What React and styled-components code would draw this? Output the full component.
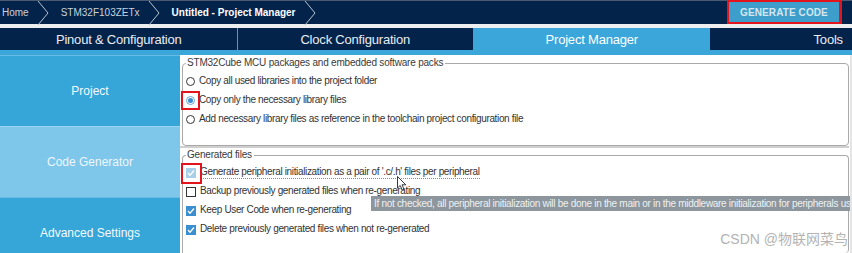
import React from 'react'
import styled, { createGlobalStyle } from 'styled-components'

const GlobalStyle = createGlobalStyle`
    html, body {
        margin: 0;
        padding: 0;
        width: 852px;
        height: 253px;
        overflow: hidden;
        background: #ffffff;
        font-family: "Liberation Sans", Arial, sans-serif;
    }
`;

const Page = styled.div`
    position: relative;
    width: 852px;
    height: 253px;
    display: flex;
    flex-direction: column;
    background: #eceef0;
    overflow: hidden;
`;
const TopBar = styled.div`
    height: 24px;
    display: flex;
    align-items: stretch;
    justify-content: space-between;
    background: #03234b;
    border-top: 1px solid #4a5a70;
    box-sizing: border-box;
`;
const Crumbs = styled.div`
    display: flex;
    align-items: center;
    padding-left: 2px;
`;
const Crumb = styled.div`
    display: flex;
    align-items: center;
    height: 100%;
    font-size: 10px;
    font-weight: ${p => (p.$current ? 'bold' : 'normal')};
    color: ${p => (p.$current ? '#ffffff' : '#c9d2dc')};
    svg { margin: 0 12px 0 8px; }
`;
const GenerateButton = styled.div`
    margin: -1px 10px 0 0;
    width: 115px;
    height: 24px;
    box-sizing: border-box;
    border: 2px solid #e3141b;
    border-right-width: 3px;
    background: #3d9dcb;
    color: #d6e6ef;
    font-size: 10px;
    font-weight: bold;
    display: flex;
    align-items: center;
    justify-content: center;
    letter-spacing: 0.1px;
`;
const TabBar = styled.div`
    margin-top: 4px;
    height: 22px;
    display: flex;
    background: #03234b;
    border-bottom: 5px solid #3aa6d9;
`;
const Tab = styled.div`
    flex: 0 0 236.5px;
    box-sizing: border-box;
    display: flex;
    align-items: center;
    justify-content: center;
    font-size: 13px;
    letter-spacing: -0.2px;
    color: ${p => (p.$active ? '#ffffff' : '#e9edf2')};
    background: ${p => (p.$active ? '#3aa6d9' : 'transparent')};
    border-left: 1px solid ${p => (p.$divider ? '#7c8a99' : 'transparent')};
`;
const Main = styled.div`
    flex: 1;
    display: flex;
    min-height: 0;
`;
const Sidebar = styled.div`
    width: 180px;
    display: flex;
    flex-direction: column;
    flex-shrink: 0;
`;
const SideItem = styled.div`
    flex: 0 0 70px;
    display: flex;
    align-items: center;
    justify-content: center;
    font-size: 12px;
    color: ${p => (p.$selected ? '#eef7fc' : '#f4fafd')};
    background: ${p => (p.$selected ? '#7ec6ea' : '#36a5d8')};
    border-top: 1px solid rgba(255, 255, 255, 0.25);
`;
const Content = styled.div`
    position: relative;
    flex: 1;
    display: flex;
    flex-direction: column;
    background: #ffffff;
    padding: 2px 1px 0 2px;
    border-right: 2px solid #e4e4e4;
`;
const Group = styled.fieldset`
    margin: 0;
    padding: ${p => p.$top}px 0 ${p => p.$bottom || 0}px 3px;
    border: 1px solid #a9a9a9;
    border-radius: 4px;
    ${p => p.$open && 'border-bottom: none; border-bottom-left-radius: 0; flex: 1;'}
    min-width: 0;
`;
const Legend = styled.legend`
    font-size: 10px;
    line-height: 12px;
    color: #3a3a3a;
    padding: 0 2px 0 1px;
    margin-left: 0;
    letter-spacing: -0.2px;
`;
const Divider = styled.div`
    height: 2px;
    margin: 0 0 1px -2px;
    background: #cfcfcf;
`;
const Row = styled.div`
    height: 19px;
    display: flex;
    align-items: center;
    gap: 4px;
    font-size: 10px;
    color: #333333;
    letter-spacing: -0.35px;
`;
const Label = styled.span`
    border-bottom: 1px dotted ${p => (p.$focus ? '#8a8a8a' : 'transparent')};
    line-height: 12px;
`;
const Control = styled.span`
    position: relative;
    flex-shrink: 0;
    display: inline-flex;
    align-items: center;
    justify-content: center;
    box-sizing: border-box;
`;
const Radio = styled(Control)`
    width: 9px;
    height: 9px;
    border-radius: 50%;
    border: 1px solid ${p => (p.$on ? '#6aa9d6' : '#333333')};
    background: #ffffff;
    &::after {
        content: '';
        display: ${p => (p.$on ? 'block' : 'none')};
        width: 5px;
        height: 5px;
        border-radius: 50%;
        background: #3b8fd0;
    }
`;
const Check = styled(Control)`
    width: 10px;
    height: 10px;
    border: 1px solid ${p => (p.$on ? (p.$dim ? '#a8d0ea' : '#3a8fd0') : '#333333')};
    background: ${p => (p.$on ? (p.$dim ? '#a8d0ea' : '#3a8fd0') : '#ffffff')};
`;
const Marker = styled.span`
    position: absolute;
    left: -6px;
    top: ${p => p.$top}px;
    width: ${p => p.$size}px;
    height: ${p => p.$size}px;
    border: 2px solid #e3141b;
    box-sizing: border-box;
    pointer-events: none;
`;
const Tooltip = styled.div`
    position: absolute;
    left: 191px;
    top: 141px;
    right: 0;
    height: 15px;
    padding-left: 3px;
    background: #8c969c;
    color: #eef1f2;
    font-size: 10px;
    line-height: 15px;
    letter-spacing: -0.3px;
    white-space: nowrap;
    overflow: hidden;
`;
const Cursor = styled.svg`
    position: absolute;
    left: 217px;
    top: 121px;
`;
const Watermark = styled.div`
    position: absolute;
    right: 4px;
    bottom: 5px;
    font-family: "Liberation Sans", "Noto Sans CJK SC", sans-serif;
    font-size: 14px;
    color: #b3b3b3;
    text-shadow: 0 0 2px #ffffff;
`;

const Chevron = () => (
    <svg width='12' height='24' viewBox='0 0 12 24'>
        <polyline points='1,0 11,12 1,24' fill='none' stroke='#b9c3ce' strokeWidth='1' />
    </svg>
)

const Tick = () => (
    <svg width='8' height='8' viewBox='0 0 8 8'>
        <polyline points='1,4 3,6.2 7,1.5' fill='none' stroke='#ffffff' strokeWidth='1.3' />
    </svg>
)

const packOptions = [
    { label: 'Copy all used libraries into the project folder' },
    { label: 'Copy only the necessary library files', on: true, marked: true },
    { label: 'Add necessary library files as reference in the toolchain project configuration file' }
]

const genOptions = [
    { label: "Generate peripheral initialization as a pair of '.c/.h' files per peripheral", on: true, dim: true, marked: true, focus: true },
    { label: 'Backup previously generated files when re-generating' },
    { label: 'Keep User Code when re-generating', on: true },
    { label: 'Delete previously generated files when not re-generated', on: true }
]

export default function App() {
    return (
        <>
            <GlobalStyle />
            <Page>
                <TopBar>
                    <Crumbs>
                        <Crumb>Home<Chevron /></Crumb>
                        <Crumb>STM32F103ZETx<Chevron /></Crumb>
                        <Crumb $current>Untitled - Project Manager<Chevron /></Crumb>
                    </Crumbs>
                    <GenerateButton>GENERATE CODE</GenerateButton>
                </TopBar>
                <TabBar>
                    <Tab>Pinout &amp; Configuration</Tab>
                    <Tab $divider>Clock Configuration</Tab>
                    <Tab $active>Project Manager</Tab>
                    <Tab>Tools</Tab>
                </TabBar>
                <Main>
                    <Sidebar>
                        <SideItem>Project</SideItem>
                        <SideItem $selected>Code Generator</SideItem>
                        <SideItem>Advanced Settings</SideItem>
                    </Sidebar>
                    <Content>
                        <Group $top={3} $bottom={16}>
                            <Legend>STM32Cube MCU packages and embedded software packs</Legend>
                            {packOptions.map(o => (
                                <Row key={o.label}>
                                    <Radio $on={o.on}>
                                        {o.marked && <Marker $top={-6} $size={19} />}
                                    </Radio>
                                    <Label>{o.label}</Label>
                                </Row>
                            ))}
                        </Group>
                        <Divider />
                        <Group $top={2} $open>
                            <Legend>Generated files</Legend>
                            {genOptions.map(o => (
                                <Row key={o.label}>
                                    <Check $on={o.on} $dim={o.dim}>
                                        {o.on && <Tick />}
                                        {o.marked && <Marker $top={-6} $size={21} />}
                                    </Check>
                                    <Label $focus={o.focus}>{o.label}</Label>
                                </Row>
                            ))}
                        </Group>
                        <Tooltip>
                            If not checked, all peripheral initialization will be done in the main or in the middleware initialization for peripherals used
                        </Tooltip>
                        <Cursor width='10' height='15' viewBox='0 0 10 15'>
                            <path d='M0.5,0.5 L0.5,12 L3.2,9.5 L5.2,14 L7,13.2 L5,8.8 L8.8,8.8 Z' fill='#ffffff' stroke='#222222' strokeWidth='0.9' />
                        </Cursor>
                    </Content>
                </Main>
                <Watermark>CSDN @物联网菜鸟</Watermark>
            </Page>
        </>
    )
}
